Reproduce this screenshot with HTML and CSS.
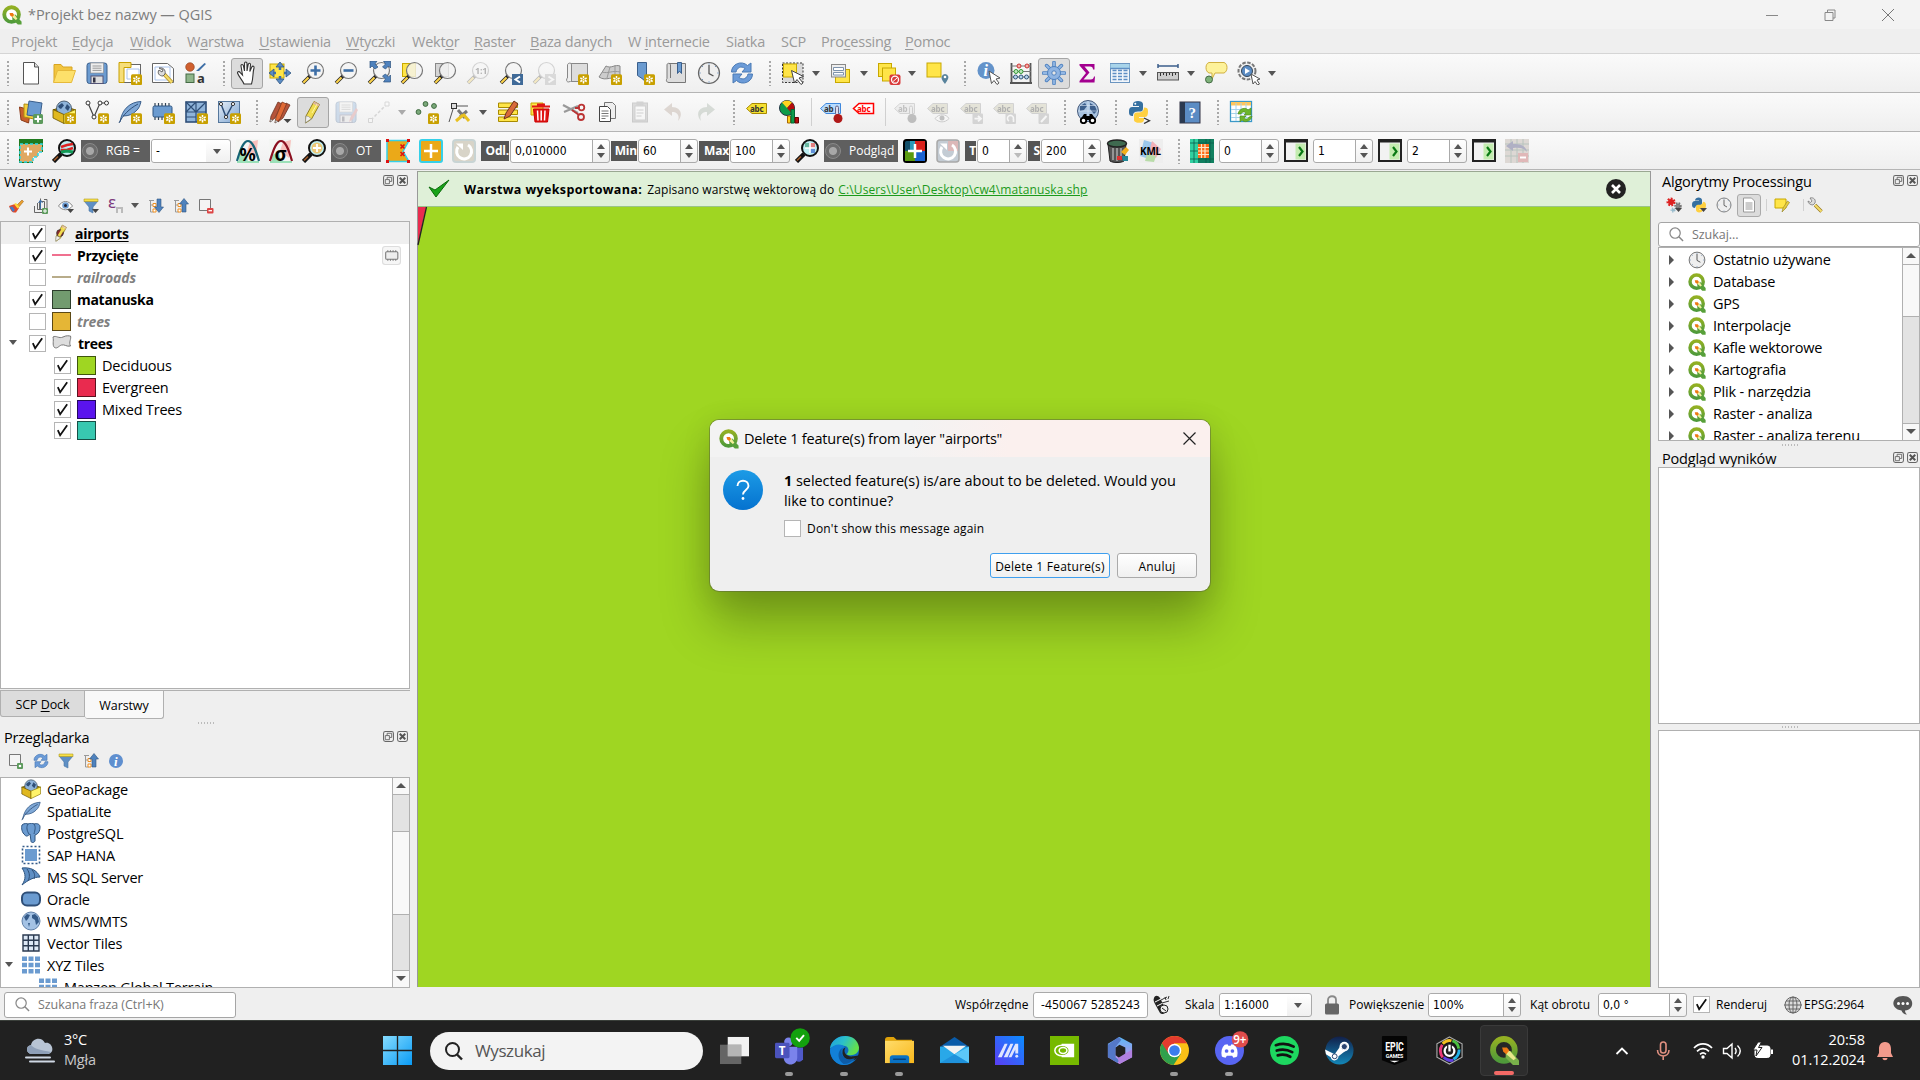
FILE: index.html
```html
<!DOCTYPE html>
<html lang="pl">
<head>
<meta charset="utf-8">
<title>*Projekt bez nazwy — QGIS</title>
<link rel="stylesheet" href="styles.css">
</head>
<body>
<svg class="paints" width="0" height="0">
<defs>
<linearGradient id="gq" x1="0" y1="0" x2="0" y2="1"><stop offset="0" stop-color="#93b023"/><stop offset="1" stop-color="#4f9a3a"/></linearGradient>
<linearGradient id="gb" x1="0" y1="0" x2="1" y2="1"><stop offset="0" stop-color="#e6eef7"/><stop offset="1" stop-color="#7ba3d0"/></linearGradient>
<linearGradient id="gw" x1="0" y1="0" x2="1" y2="1"><stop offset="0" stop-color="#86dcff"/><stop offset="1" stop-color="#0a9bf5"/></linearGradient>
<linearGradient id="ge" x1="0" y1="0" x2="1" y2=".4"><stop offset="0" stop-color="#1f9de0"/><stop offset=".5" stop-color="#2bc0c9"/><stop offset="1" stop-color="#63e04c"/></linearGradient>
<linearGradient id="gm" x1="0" y1="1" x2="1" y2="0"><stop offset="0" stop-color="#5b3df5"/><stop offset="1" stop-color="#0a8dff"/></linearGradient>
<linearGradient id="g3" x1="0" y1="0" x2="0" y2="1"><stop offset="0" stop-color="#5ab8f5"/><stop offset="1" stop-color="#d08be8"/></linearGradient>
<linearGradient id="gs" x1="0" y1="0" x2="0" y2="1"><stop offset="0" stop-color="#12204a"/><stop offset="1" stop-color="#1387b8"/></linearGradient>
<linearGradient id="gf" x1="0" y1="0" x2="1" y2="1"><stop offset="0" stop-color="#ffdc6b"/><stop offset="1" stop-color="#f9b81c"/></linearGradient>
<linearGradient id="gk" x1="0" y1="0" x2="0" y2="1"><stop offset="0" stop-color="#1c9be6"/><stop offset="1" stop-color="#0572cf"/></linearGradient>
</defs>
</svg>
<svg class="sprite">
<defs>
<g id="nb"><rect x="13" y="13.200" width="11" height="11" rx="1.500" fill="#c8a000"/><path d="M18.500 15v7.400M15.300 16.800l6.400 3.700M15.300 20.500l6.400-3.700" stroke="#fff" stroke-width="1.500"/><circle cx="18.500" cy="18.700" r="1.400" fill="#c8a000"/><circle cx="18.500" cy="18.700" r=".8" fill="#fff"/></g>
<g id="lens"><path d="M9.500 14.500L2 22" stroke="#222" stroke-width="3.600"/><path d="M7.500 16.500L2.300 21.700" stroke="#fbd24a" stroke-width="2.200"/><circle cx="14.500" cy="9.500" r="8" fill="#f4f4f4" fill-opacity=".8" stroke="#777" stroke-width="1.200"/></g>
<g id="blens"><path d="M9 15L1.500 22.500" stroke="#111" stroke-width="4.500"/><path d="M6 17.500L2 21.500" stroke="#a05a28" stroke-width="1.600"/><circle cx="15" cy="9" r="8" fill="#bdeef2" stroke="#111" stroke-width="2"/></g>
<g id="tag"><path d="M7 3.500H21.500V13.500H7L1.500 8.500Z"/></g>
</defs>
<symbol id="q" viewBox="0 0 24 24"><circle cx="11.500" cy="11.500" r="8.800" fill="#fff" stroke="url(#gq)" stroke-width="4.600"/><path d="M12 13l4-1.500L23.500 20v3.500h-4.500L12.500 17z" fill="#58a03a"/><path d="M12 11l3 .5 3.500 5-2 1.500-4.500-4z" fill="#f4ef9a"/><path d="M9 9.500l4 0 1.500 2.500-2.200 2.500-2.500-2z" fill="#ee7913"/></symbol>
<symbol id="new" viewBox="0 0 24 24"><path d="M4.500 1.500h11l4 4.500v17h-15z" fill="#fff" stroke="#555"/><path d="M15.500 1.500v4.500h4" fill="#ddd" stroke="#555"/></symbol>
<symbol id="open" viewBox="0 0 24 24"><path d="M2 21V3.500h7l2 2.500h9v4" fill="#f2c540" stroke="#d8a520"/><path d="M1.500 21.500l4-12h18l-4 12z" fill="#fde06a" stroke="#e6b93a"/></symbol>
<symbol id="save" viewBox="0 0 24 24"><rect x="2" y="2" width="20" height="20.500" rx="2.500" fill="#6b9bd0" stroke="#3a5f8c"/><rect x="5.500" y="2" width="13" height="10" fill="#eee" stroke="#888" stroke-width=".6"/><path d="M7.500 5h9M7.500 7.200h9M7.500 9.400h9" stroke="#999"/><rect x="6" y="15" width="12" height="7.500" fill="#ddd" stroke="#557"/><rect x="8" y="16.500" width="2.500" height="5" fill="#334"/></symbol>
<symbol id="lay" viewBox="0 0 24 24"><rect x="2.500" y="3.500" width="20" height="18" fill="#fff" stroke="#666"/><path d="M1 1.500h12v5H6v15H1z" fill="#f6de7a" stroke="#c8a000"/><path d="M9 8v10h12V8z" fill="none" stroke="#aac4ee"/><use href="#nb"/></symbol>
<symbol id="mgr" viewBox="0 0 24 24"><path d="M1.500 2.500h15l6 5v14h-21z" fill="#fff" stroke="#666"/><path d="M4 6h15v13H4z" fill="none" stroke="#aac4ee"/><path d="M13 13l8 8.500" stroke="#b8962e" stroke-width="4"/><path d="M13 13l8 8.500" stroke="#f5dd6a" stroke-width="2"/><path d="M8 7c4-1 7 2 6 6l-2 2c-4 0-6-3-4-6l3 2 1-2z" fill="#ddd" stroke="#666"/></symbol>
<symbol id="sty" viewBox="0 0 24 24"><circle cx="6" cy="6" r="4.300" fill="#d0602f" stroke="#8b3a18" stroke-width=".6"/><path d="M12 10L20.500 2l1.500 1-7 7z" fill="#3d6ea6"/><rect x="2" y="13" width="8" height="8.500" fill="#8fb58a" stroke="#456b45"/><text x="13" y="21.500" font-family="Noto Sans" font-size="13" fill="#333">a</text></symbol>
<symbol id="hand" viewBox="0 0 24 24"><path d="M9 23c-1-3-5-7-6.500-11 0-2 2-1.500 3-.2L7.500 14 6 5c-.2-2 2-2 2.400-.3L9.500 10V2.500c0-2 2.500-2 2.500 0V10l1.200-6.500c.5-2 2.500-1.500 2.300.3L14.800 10.500l2-4.500c1-1.500 2.700-.7 2.200 1-1.500 5-.5 10-2.500 16z" fill="#fff" stroke="#333" stroke-width="1.100"/></symbol>
<symbol id="pans" viewBox="0 0 24 24"><rect x="2" y="3" width="14" height="14" fill="#ffe548" stroke="#c8a800"/><path d="M12 1l4 5H8zM12 23l4-5H8zM1 12l5-4v8zM23 12l-5-4v8z" fill="#5b8cc4" stroke="#2f5580" stroke-width=".8"/><path d="M12 6v3M12 15v3M5 12h3M16 12h3" stroke="#3d6ea6" stroke-width="2.500"/></symbol>
<symbol id="zin" viewBox="0 0 24 24"><use href="#lens"/><path d="M14.500 4.500v10M9.500 9.500h10" stroke="#3d6ea6" stroke-width="2.600"/></symbol>
<symbol id="zout" viewBox="0 0 24 24"><use href="#lens"/><path d="M9.500 9.500h10" stroke="#3d6ea6" stroke-width="2.600"/></symbol>
<symbol id="zfull" viewBox="0 0 24 24"><use href="#lens"/><path d="M3 0h7L8 3l3 3-3 2-3-3-2 2zM23.500 0h-7l2 3-3 3 3 2 3-3 2 2zM23.500 21h-7l2-3-3-3 3-2 3 3 2-2z" fill="#4f82bd" stroke="#2f5580" stroke-width=".7"/></symbol>
<symbol id="zsel" viewBox="0 0 24 24"><rect x="2.500" y="2.500" width="13" height="13" fill="#ffe548" stroke="#c8a800"/><use href="#lens"/></symbol>
<symbol id="zlay" viewBox="0 0 24 24"><rect x="2.500" y="2.500" width="13" height="13" fill="#d5d5d5" stroke="#888"/><use href="#lens"/></symbol>
<symbol id="znat" viewBox="0 0 24 24"><use href="#lens"/><text x="9" y="13" font-family="Noto Sans" font-weight="700" font-size="9">1:1</text></symbol>
<symbol id="zlast" viewBox="0 0 24 24"><use href="#lens"/><rect x="13" y="13" width="11" height="11" fill="#3f6a98"/><path d="M21 15.500l-4.500 3 4.500 3" stroke="#fff" stroke-width="2" fill="none"/></symbol>
<symbol id="znext" viewBox="0 0 24 24"><use href="#lens"/><rect x="13" y="13" width="11" height="11" fill="#999"/><path d="M16.500 15.500l4.500 3-4.500 3" stroke="#fff" stroke-width="2" fill="none"/></symbol>
<symbol id="nmap" viewBox="0 0 24 24"><path d="M5 2.500h17.500v18H5z" fill="#ddd" stroke="#888"/><path d="M5 20.500c-4 2-4-3-2.500-3.500V4c0-2 4-3 4 0v16" fill="#eee" stroke="#888"/><use href="#nb"/></symbol>
<symbol id="n3d" viewBox="0 0 24 24"><path d="M1 16L8 5c5 3 9-2 14 0v13c-7-4-14 3-21-2z" fill="#ccc" stroke="#888"/><path d="M4 11c6 2 11-2 18 0M12 6L9 17M17 4v12" stroke="#999" fill="none"/><use href="#nb"/></symbol>
<symbol id="nbm" viewBox="0 0 24 24"><path d="M6.500 1.500h9v20l-4.500-4-4.500-3z" fill="#6b9bd0" stroke="#3a5f8c"/><use href="#nb"/></symbol>
<symbol id="sbm" viewBox="0 0 24 24"><path d="M5 2.500h16.500v19H5c-3 0-3-3-2-4V4c0-2 3-2.500 3.500 0v13" fill="#ddd" stroke="#777"/><path d="M13.500 1.500h4v11l-2-2.500-2 2.500z" fill="#6b9bd0" stroke="#3a5f8c"/></symbol>
<symbol id="clock" viewBox="0 0 24 24"><circle cx="12" cy="12" r="10.500" fill="#efefef" stroke="#666" stroke-width="1.200"/><path d="M12 4v8.500l4.500 2.500" stroke="#555" fill="none" stroke-width="1.300"/><path d="M12 2.500v1M12 20.500v1M2.500 12h1M20.500 12h1M5.300 5.300l.7.7M18.700 5.300l-.7.7M5.300 18.700l.7-.7" stroke="#3d6ea6"/></symbol>
<symbol id="ref" viewBox="0 0 24 24"><path d="M1.500 11c0-8 10-12 16-6.500L21 2v9h-9l3-3.500c-4-3-8-1-9 3.500z" fill="#6b9bd8" stroke="#4a7ab5"/><path d="M22.500 13c0 8-10 12-16 6.500L3 22v-9h9l-3 3.500c4 3 8 1 9-3.500z" fill="#6b9bd8" stroke="#4a7ab5"/></symbol>
<symbol id="sel" viewBox="0 0 24 24"><rect x="1.500" y="2" width="20.500" height="19.500" fill="#d9d9d9" stroke="#333" stroke-dasharray="2 1.500"/><rect x="2.500" y="3" width="13" height="13" fill="#ffe548" stroke="#c8a800"/><path d="M10.500 9.500l12 6-4.500 1.500 4 5-2 1.500-4-5-2.500 3.500z" fill="#fff" stroke="#444"/></symbol>
<symbol id="form" viewBox="0 0 24 24"><rect x="6.500" y="8.500" width="14" height="13" fill="#ffe548" stroke="#c8a800"/><rect x="2.500" y="3.500" width="14" height="12.500" fill="#eee" stroke="#888"/><path d="M4.500 6.500h10v3h-10zM4.500 11.500h10v2.500h-10z" fill="#fff" stroke="#7d93ad"/></symbol>
<symbol id="desel" viewBox="0 0 24 24"><rect x="1.500" y="2.500" width="13" height="13" fill="#ffe548" stroke="#c8a800"/><rect x="5.500" y="7" width="13" height="13" fill="#ffe548" stroke="#c8a800"/><rect x="12.500" y="13.500" width="11" height="10.500" rx="2" fill="#d93a3a"/><circle cx="18" cy="18.700" r="3.500" fill="none" stroke="#fff" stroke-width="1.300"/><path d="M15.500 21l5-4.500" stroke="#fff"/></symbol>
<symbol id="sloc" viewBox="0 0 24 24"><rect x="2" y="2" width="14" height="14" fill="#ffe548" stroke="#c8a800"/><path d="M20 23c-4-5-3.500-6-3.300-7.500a3.400 3.400 0 016.600 0C23.500 17 23.500 18 20 23z" fill="#58839c"/><circle cx="20" cy="16" r="1.300" fill="#fff"/></symbol>
<symbol id="iden" viewBox="0 0 24 24"><circle cx="10" cy="9.500" r="8.500" fill="#6493ca"/><text x="7.500" y="15" font-family="Liberation Serif" font-style="italic" font-weight="700" font-size="16" fill="#fff">i</text><path d="M13 10l11 7-4 1 3 4-2 1.500-3-4-2.500 3z" fill="#fff" stroke="#555"/></symbol>
<symbol id="abac" viewBox="0 0 24 24"><path d="M2.500 2v20M21.500 2v20M1 22h22" stroke="#555" stroke-width="1.800"/><path d="M2 5h20M2 10.500h20M2 16h20" stroke="#777"/><g fill="#f4b0a8" stroke="#c33"><circle cx="10" cy="5" r="2"/><circle cx="18" cy="5" r="2"/></g><g fill="#bfe8bf" stroke="#393"><circle cx="7" cy="10.500" r="2"/><circle cx="12" cy="10.500" r="2"/></g><g fill="#b8d4ee" stroke="#357"><circle cx="6.500" cy="16" r="2"/><circle cx="12" cy="16" r="2"/><circle cx="17.500" cy="16" r="2"/></g></symbol>
<symbol id="gear" viewBox="0 0 24 24"><path d="M12 1.500v21M1.500 12h21M4.600 4.600l14.800 14.800M19.400 4.600L4.600 19.400" stroke="#4f82c0" stroke-width="3.600" stroke-linecap="round"/><path d="M12 1.500v21M1.500 12h21M4.600 4.600l14.800 14.800M19.400 4.600L4.600 19.400" stroke="#94b8e4" stroke-width="1.800" stroke-linecap="round"/><circle cx="12" cy="12" r="6.500" fill="#8fb4e2" stroke="#4f82c0"/><circle cx="12" cy="12" r="2.200" fill="#e6e6e6" stroke="#4f82c0"/></symbol>
<symbol id="sum" viewBox="0 0 24 24"><path d="M4.500 3h15v5.500h-1.500c0-2-1-3-3-3H9.500l5 6-6 7h7c2.500 0 3-1 3.500-3h1L19.500 21.500h-15v-1.500l6.500-8L4.500 4.500z" fill="#a3008f"/></symbol>
<symbol id="tbl" viewBox="0 0 24 24"><rect x="2.500" y="2.500" width="19" height="19" fill="#f2f6fb" stroke="#6b95c0"/><path d="M2.500 3h19v4h-19z" fill="#a8d4ea"/><path d="M4.500 9.500h4M10 9.500h4M15.500 9.500h4M4.500 12.500h4M10 12.500h4M15.500 12.500h4M4.500 15.500h4M10 15.500h4M15.500 15.500h4M4.500 18.500h4M10 18.500h4M15.500 18.500h4M2.500 7.500h19" stroke="#5f8fc4" stroke-width="1.400"/></symbol>
<symbol id="rul" viewBox="0 0 24 24"><path d="M2 5h20M2 3v4M22 3v4" stroke="#3d5f8c" stroke-width="1.500"/><rect x="1.500" y="11.500" width="21" height="7.500" fill="#ccc" stroke="#555"/><path d="M4.500 12v3M7.500 12v2M10.500 12v3M13.500 12v2M16.500 12v3M19.500 12v2" stroke="#333"/></symbol>
<symbol id="tip" viewBox="0 0 24 24"><path d="M5 1.500h15c4 1 4 9 0 10.500h-9L8 18V12H5c-4-1.500-4-9.500 0-10.500z" fill="#fdf29a" stroke="#d0b040"/><circle cx="5" cy="18.500" r="3.500" fill="#7fb37a" stroke="#456b45"/></symbol>
<symbol id="run" viewBox="0 0 24 24"><circle cx="10" cy="10" r="8.500" fill="#eee" stroke="#777" stroke-width="2" stroke-dasharray="3.500 1.500"/><circle cx="10" cy="10" r="5.500" fill="#5b8cc4" stroke="#345"/><path d="M8 7l5 3-5 3z" fill="#fff"/><path d="M14 13l9 5-3 1 2.500 4-2 1-2.500-3.500-2 2.500z" fill="#fff" stroke="#555"/></symbol>
<symbol id="dsm" viewBox="0 0 24 24"><path d="M0.500 7l11 3-2 13L2 20z" fill="#c8602c" stroke="#8b3a18"/><path d="M5 4l11 1-1 14-10-2z" fill="#f4cf3a" stroke="#b08d10"/><path d="M10 1l13 2-2 14-13-2z" fill="#6b9bd0" stroke="#3a5f8c"/><rect x="14" y="14" width="10" height="10" rx="1.500" fill="#5c9a5c"/><path d="M19 15.500v7M15.500 19h7" stroke="#fff" stroke-width="2"/></symbol>
<symbol id="gpk" viewBox="0 0 24 24"><path d="M1 10l11-4 11.500 4L12 15z" fill="#c8a000" stroke="#665000"/><circle cx="12" cy="8.500" r="7.500" fill="#8fb4da" stroke="#345" stroke-width=".8"/><path d="M6 6l4-3 2 2.500-3 3.500-2-1zM13 8l2-4 3 3-2 4z" fill="#2f4f78"/><path d="M1 9.500l11 5v9L1 18z" fill="#e0b820" stroke="#665000" stroke-width=".8"/><path d="M23.500 9.500L12 14.500v9L23.500 18z" fill="#fff36a" stroke="#8c7500" stroke-width=".8"/></symbol>
<symbol id="gpkn" viewBox="0 0 24 24"><use href="#gpk"/><use href="#nb"/></symbol>
<symbol id="vn" viewBox="0 0 24 24"><path d="M3 3l6 14L15 3l6 0" fill="none" stroke="#444" stroke-width="1.200"/><g fill="#fff" stroke="#333"><circle cx="3" cy="3" r="2"/><circle cx="9" cy="17" r="2"/><circle cx="15" cy="3" r="2"/><circle cx="21.500" cy="3" r="2"/></g><use href="#nb"/></symbol>
<symbol id="fea" viewBox="0 0 24 24"><path d="M2 22C4 9 12 2 23 1.500c-1 4-2 7-5 9.500-3 3-7 5-13 5" fill="#7fa8d6" stroke="#3a5f8c"/><path d="M1 23C5 15 11 9 20 4" fill="none" stroke="#2f4f78"/></symbol>
<symbol id="fean" viewBox="0 0 24 24"><use href="#fea"/><use href="#nb"/></symbol>
<symbol id="mem" viewBox="0 0 24 24"><path d="M4 3v17M7.500 3v17M11 3v17M14.500 3v17M18 3v17" stroke="#345" stroke-width="1.200"/><rect x="2" y="6" width="19" height="11" rx="1.500" fill="#6b9bd0" stroke="#2f5580"/><use href="#nb"/></symbol>
<symbol id="mesh" viewBox="0 0 24 24"><rect x="2" y="2" width="20" height="20" fill="#8fb4da" stroke="#2f4f78" stroke-width="1.600"/><path d="M2 12h20M12 2v20M2 2l10 10M12 2L2 12M12 12l10-10M2 17h10" stroke="#2f4f78" stroke-width="1.200"/><use href="#nb"/></symbol>
<symbol id="vv" viewBox="0 0 24 24"><rect x="1.500" y="1.500" width="21" height="21" fill="url(#gb)" stroke="#55779c"/><path d="M4 4l5 13L16 4" fill="none" stroke="#2f4f78" stroke-width="1.500"/><g fill="#fff" stroke="#333"><circle cx="4" cy="4" r="1.600"/><circle cx="9" cy="17" r="1.600"/><circle cx="16" cy="4" r="1.600"/></g><use href="#nb"/></symbol>
<symbol id="pens" viewBox="0 0 24 24"><path d="M3 16L10 2l4 2-7 14-5 4zM12 16l6-13 4 2-7 13-5 4z" fill="#b5543a" stroke="#6d3222" stroke-width=".8"/><path d="M8 17L14 2l4.500 2L12 19l-5 4z" fill="#e06a35" stroke="#7d3820" stroke-width=".8"/><path d="M2 22l.6-3 2 1.500zM7 23l.6-3 2 1.500z" fill="#eee" stroke="#555" stroke-width=".5"/><path d="M15.500 19h8l-4 4z" fill="#444"/></symbol>
<symbol id="pen" viewBox="0 0 24 24"><path d="M5 16L13 1.500l5.500 3L10.500 19l-6 4z" fill="#f0dc50" stroke="#8f7d20"/><path d="M13 1.500l5.500 3-1 2-5.500-3z" fill="#ddb4a0"/><path d="M5 16l2.500.5 2.800 2.300-6 4z" fill="#eee" stroke="#888" stroke-width=".6"/><path d="M11 13l5-9" stroke="#fff8a0"/></symbol>
<symbol id="penpt" viewBox="0 0 24 24"><use href="#pen" x="2"/><circle cx="12" cy="12" r="4.500" fill="#8a2a2a" stroke="#333"/><path d="M9 15l6-10 3 2-6 10z" fill="#f0dc50"/></symbol>
<symbol id="sved" viewBox="0 0 24 24"><use href="#save"/><path d="M15 22l1.500-5L22 8l2 2-5 9z" fill="#c66"/></symbol>
<symbol id="line" viewBox="0 0 24 24"><path d="M4 20L20 4" stroke="#888" stroke-width="1.500" stroke-dasharray="3 2"/><g fill="#fff" stroke="#888"><path d="M1.500 18.500h4v4h-4zM18 2h4v4h-4z"/></g></symbol>
<symbol id="pts" viewBox="0 0 24 24"><g fill="#7aa87a" stroke="#3f6a3f"><circle cx="3.500" cy="12" r="2.400"/><circle cx="10.500" cy="4" r="2.400"/><circle cx="19" cy="6" r="2.400"/></g><use href="#nb"/></symbol>
<symbol id="vtx" viewBox="0 0 24 24"><path d="M1 22L6 6h14" fill="none" stroke="#555"/><rect x="3.500" y="3.500" width="5" height="5" fill="#ddd" stroke="#333"/><path d="M12 17l7-6M10 10l7 8" stroke="#777" stroke-width="3"/><path d="M8 21l7-6M15 14l6 7" stroke="#e8c020" stroke-width="3"/></symbol>
<symbol id="med" viewBox="0 0 24 24"><path d="M2.500 3h19v4.500h-19zM2.500 10h19v4.500h-19zM2.500 17h19v4.500h-19z" fill="#ffe548" stroke="#a88a00"/><path d="M8 19l2-6L18 1l4 3-8 12z" fill="#d86a3a" stroke="#6d3222"/></symbol>
<symbol id="del" viewBox="0 0 24 24"><path d="M2 3h12v12H2z" fill="#ffe548" stroke="#c8a800"/><path d="M4.500 9h15.500l-1.500 13H6z" fill="#e01515" stroke="#c00"/><path d="M3 5.500h18v2H3zM8 3.500h8v2H8z" fill="#e01515"/><path d="M8.500 10.500l.5 10M12.200 10.500v10M16 10.500l-.5 10" stroke="#fff" stroke-width="1.500"/></symbol>
<symbol id="cut" viewBox="0 0 24 24"><path d="M1 5l15 8M2 12l14-6" stroke="#999" stroke-width="2.200"/><circle cx="19.500" cy="7.500" r="2.800" fill="none" stroke="#b33" stroke-width="1.800"/><circle cx="19" cy="17" r="3" fill="none" stroke="#b33" stroke-width="1.800"/><path d="M10 10l7 5M13 8l5 0" stroke="#b33" stroke-width="1.800"/></symbol>
<symbol id="copy" viewBox="0 0 24 24"><path d="M9.500 2.500h8l3 3v13h-11z" fill="#eee" stroke="#777"/><path d="M4.500 6.500h8l3 3v12h-11z" fill="#fff" stroke="#444"/><path d="M6.500 11h7M6.500 13.500h7M6.500 16h7M6.500 18.500h4" stroke="#777"/></symbol>
<symbol id="paste" viewBox="0 0 24 24"><rect x="4.500" y="3" width="15" height="19" fill="#999" stroke="#666"/><rect x="7" y="6" width="10.500" height="14" fill="#fff" stroke="#777"/><rect x="8.500" y="1.500" width="7" height="4" fill="#777"/><path d="M8.500 10h7M8.500 13h7M8.500 16h5" stroke="#777"/></symbol>
<symbol id="undo" viewBox="0 0 24 24"><path d="M3 9.500L11 3v4c8 0 12 7 6 14 2-6-1-9-6-9v4z" fill="#a08878"/></symbol>
<symbol id="redo" viewBox="0 0 24 24"><path d="M21 9.500L13 3v4C5 7 1 14 7 21c-2-6 1-9 6-9v4z" fill="#889988"/></symbol>
<symbol id="abc" viewBox="0 0 24 24"><use href="#tag" fill="#f5e032" stroke="#a88a00"/><text x="5" y="11.600" font-family="Noto Sans" font-size="8" font-weight="700" fill="#333">abc</text></symbol>
<symbol id="abcr" viewBox="0 0 24 24"><use href="#tag" fill="#fff" stroke="red" stroke-width="1.500"/><text x="5" y="11.600" font-family="Noto Sans" font-size="8" font-weight="700" fill="red">abc</text></symbol>
<symbol id="dia" viewBox="0 0 24 24"><circle cx="9" cy="8" r="7.500" fill="#0d9b4a" stroke="#234"/><path d="M9 8L4 2.500A7.500 7.500 0 0114 2.500z" fill="#ffd21f"/><path d="M9 8l5-5.500a7.500 7.500 0 010 11z" fill="#b50d0d"/><path d="M9.500 16h3v7h-3z" fill="#ffd21f" stroke="#a60"/><path d="M13 9.500h3.500V23H13z" fill="#0d9b4a" stroke="#063"/><path d="M17 17.500h3.500V23H17z" fill="#b50d0d" stroke="#600"/></symbol>
<symbol id="abp" viewBox="0 0 24 24"><use href="#tag" fill="#b8dcff" stroke="#3f88dd"/><text x="5" y="11.600" font-family="Noto Sans" font-size="8" font-weight="700" fill="#333">ab</text><rect x="16.500" y="6" width="3" height="9" rx="1.500" fill="#dde" stroke="#668"/><circle cx="19" cy="18.500" r="4.500" fill="#b01818"/></symbol>
<symbol id="abe" viewBox="0 0 24 24"><use href="#tag" fill="#b8b48c" stroke="#777"/><text x="5" y="11.600" font-family="Noto Sans" font-size="8" font-weight="700">abc</text><path d="M9 18.500c4-5 11-5 14 0-4 4.500-10 4.500-14 0z" fill="#fff" stroke="#666"/><circle cx="16" cy="18" r="2.500" fill="#444"/></symbol>
<symbol id="abm" viewBox="0 0 24 24"><use href="#tag" fill="#b8b48c" stroke="#777"/><text x="5" y="11.600" font-family="Noto Sans" font-size="8" font-weight="700">abc</text><rect x="13.500" y="13.500" width="10.500" height="10.500" rx="1" fill="#888"/><path d="M15.500 18.700h6M19 16l3 2.700-3 2.700" stroke="#fff" stroke-width="1.800" fill="none"/></symbol>
<symbol id="abro" viewBox="0 0 24 24"><use href="#tag" fill="#b8b48c" stroke="#777"/><text x="5" y="11.600" font-family="Noto Sans" font-size="8" font-weight="700">abc</text><rect x="13.500" y="13.500" width="10.500" height="10.500" rx="1" fill="#888"/><path d="M17 21a3 3 0 114-1M21.500 22v-3" stroke="#fff" stroke-width="1.600" fill="none"/></symbol>
<symbol id="abed" viewBox="0 0 24 24"><use href="#tag" fill="#b8b48c" stroke="#777"/><text x="5" y="11.600" font-family="Noto Sans" font-size="8" font-weight="700">abc</text><rect x="13.500" y="13.500" width="10.500" height="10.500" rx="1" fill="#888"/><path d="M16 22l5.500-6" stroke="#fff" stroke-width="2"/></symbol>
<symbol id="glob" viewBox="0 0 24 24"><circle cx="12" cy="11" r="10.500" fill="#a9c3e0" stroke="#45597a"/><path d="M4 6l5-3 2 3-3 4-4 1zM14 3l5 3 2 5-3 3-4-5z" fill="#3d5f8c"/><path d="M12 1v20M2 11h20M4 5.500h16" stroke="#dde8f5" stroke-width=".6"/><path d="M4 20l4-6h2.500v2h3v-2H16l4 6z" fill="#000"/><circle cx="7.500" cy="20.500" r="2.700" fill="#fff" stroke="#000" stroke-width="1.800"/><circle cx="16.500" cy="20.500" r="2.700" fill="#fff" stroke="#000" stroke-width="1.800"/></symbol>
<symbol id="py" viewBox="0 0 24 24"><path d="M2 12c0-4 1-5 4-5h6V6H6V4c0-4 10-4 10 0v4c0 3-1 3.500-4 3.500S6 12 6 16c-3 0-4-1-4-4z" fill="#3670a0"/><circle cx="8.300" cy="3.800" r="1" fill="#fff"/><path d="M21 11c0 5-1 6-4 6h-5v1h5v2c0 4-10 3.500-10 0v-4c0-3 1-3.500 4-3.500s6-1 6-5c3 0 4 1 4 3.500z" fill="#ffd040"/></symbol>
<symbol id="pyc" viewBox="0 0 24 24"><use href="#py"/><path d="M17 18l5.500 2.700L17 23.500" fill="none" stroke="#333" stroke-width="1.300"/></symbol>
<symbol id="help" viewBox="0 0 24 24"><rect x="2" y="2" width="20" height="21" fill="#5b8cc4" stroke="#334"/><path d="M2 2h5v21H2z" fill="#2b3a50"/><text x="10.500" y="17.500" font-family="Liberation Serif" font-size="15" fill="#fff">?</text></symbol>
<symbol id="tref" viewBox="0 0 24 24"><rect x="1.500" y="1.500" width="21" height="20" fill="#fff" stroke="#3a98c8" stroke-width="1.300"/><path d="M2 2h20v3.500H2z" fill="#ffc65c"/><path d="M2 9.500h20M2 13.500h20M2 17.500h20M7 3v18M12 3v18M17 3v18" stroke="#a8d4ea"/><path d="M9 14c1-6 8-7 10-4l3-2v7h-7l2-2c-2-2-4-1-5 1zM23 16c-1 6-8 7-10 4l-2 2v-6h6l-2 2c2 2 4 1 5-1z" fill="#6cb52c" stroke="#4a8a18" stroke-width=".6"/></symbol>
<symbol id="s1" viewBox="0 0 24 24"><path d="M0 0h24v13h-5v5h-5v6H0z" fill="#1f7a1f"/><path d="M1 5h22v8h-4v5h-5v5H1z" fill="#e0a862" stroke="#2fd8e8" stroke-width="1.500" stroke-dasharray="3 2"/><path d="M9 8.500v8M5 12.500h8" stroke="#fff" stroke-width="2"/></symbol>
<symbol id="s2" viewBox="0 0 24 24"><use href="#blens"/><path d="M9 8l6-2 6-1M9 11l6 0 6-2" stroke="#d22" stroke-width="2.500"/><path d="M9 13l6-1 6 1" stroke="#195" stroke-width="3"/></symbol>
<symbol id="s3" viewBox="0 0 24 24"><rect width="24" height="24" fill="#f4f6f4"/><path d="M14 3l8-2-2 18-9-7z" fill="#f8c0bc"/><path d="M3 16l7-3 2 10H3zM1 22h22v2H1z" fill="#9be0b8"/><path d="M1 22C5 8 8 2 12 2s7 6 11 20" fill="none" stroke="#176478" stroke-width="2.200"/><text x="3.500" y="21.500" font-family="Noto Sans" font-weight="700" font-size="18">%</text></symbol>
<symbol id="s4" viewBox="0 0 24 24"><rect width="24" height="24" fill="#f4f6f4"/><path d="M14 3l8-2-2 18-9-7z" fill="#f8c0bc"/><path d="M3 16l7-3 2 10H3zM1 22h22v2H1z" fill="#9be0b8"/><path d="M1 22C5 8 8 2 12 2s7 6 11 20" fill="none" stroke="#8b1020" stroke-width="2.200"/><text x="5.500" y="21.500" font-family="Noto Sans" font-weight="700" font-size="19">σ</text></symbol>
<symbol id="s5" viewBox="0 0 24 24"><use href="#blens"/><circle cx="15" cy="9" r="5.500" fill="#ecc878"/><path d="M15 5v8M11 9h8" stroke="#fff" stroke-width="1.800"/></symbol>
<symbol id="s6" viewBox="0 0 24 24"><path d="M1 1.500h22l-6 11 6 10H1z" fill="#eba918" stroke="#35d0e8" stroke-width="1.500"/><path d="M0 0h3v3H0zM21 0h3v3h-3zM0 21h3v3H0zM21 21h3v3h-3z" fill="#d11"/><path d="M14.500 5.500l4 4m0-4l-4 4M14.500 13l4 4m0-4l-4 4" stroke="#d11" stroke-width="1.600"/></symbol>
<symbol id="s7" viewBox="0 0 24 24"><rect x="1" y="1" width="22" height="22" rx="2" fill="#eba918" stroke="#35d0e8" stroke-width="2"/><path d="M12 5v14M5 12h14" stroke="#fff" stroke-width="2.500"/></symbol>
<symbol id="s8" viewBox="0 0 24 24"><rect x="1" y="1" width="22" height="22" rx="3" fill="#d8d4c8" stroke="#c8d4d4" stroke-width="2"/><path d="M6 8a7.500 7.500 0 1010-2" stroke="#fff" stroke-width="3" fill="none"/><path d="M4 4.500h7v6.500z" fill="#fff"/></symbol>
<symbol id="s9" viewBox="0 0 24 24"><use href="#blens"/><path d="M10 4h5v5h-5z" fill="#68b8a0"/><path d="M15 4h5v5h-5z" fill="#e08080"/><path d="M15 9h5v5h-5z" fill="#6090d8"/><path d="M15 4v10M10 9h10" stroke="#fff" stroke-width="1.600"/></symbol>
<symbol id="s10" viewBox="0 0 24 24"><rect x="1" y="1" width="22" height="22" rx="2.500" fill="#14506a" stroke="#000" stroke-width="2"/><path d="M12 2h10v10H12z" fill="#d8201a"/><path d="M2 12h10v10H2z" fill="#5a9a10"/><path d="M12 12h10v10H12z" fill="#1a62d0"/><path d="M7 2h5v10H7z" fill="#2a9ab8"/><path d="M12 5v14M5 12h14" stroke="#fff" stroke-width="2.500"/></symbol>
<symbol id="s11" viewBox="0 0 24 24"><rect x="1" y="1" width="22" height="22" rx="3" fill="#c4ccd4" stroke="#a8a8a8" stroke-width="1.500"/><path d="M12 2h10v10H12z" fill="#dcb8b8"/><path d="M6 8a7.500 7.500 0 1010-2" stroke="#fff" stroke-width="3" fill="none"/><path d="M4 4.500h7v6.500z" fill="#fff"/></symbol>
<symbol id="s12" viewBox="0 0 24 24"><path d="M2 5h18l-2 17c-3 2-11 2-14 0z" fill="#555" stroke="#222"/><ellipse cx="11" cy="4.500" rx="9.500" ry="3.500" fill="#3f6a50" stroke="#222" stroke-width="1.500"/><path d="M7 9v12M11 9v13M15 9v12" stroke="#aaa" stroke-width="1.500"/><path d="M15 13l5-5 3 3-4 5z" fill="#f4b01a"/><path d="M11 17h5v4h-5z" fill="#d33"/><path d="M16 17h6v5h-5z" fill="#289"/></symbol>
<symbol id="s13" viewBox="0 0 24 24"><rect width="24" height="24" fill="#eee"/><path d="M5 1l10 3-5 16-9-3z" fill="#9cc8ec"/><path d="M13 2l9 8-5 9-7-5z" fill="#f2b0b8"/><path d="M8 15l9 2-2 6-9-1z" fill="#b8dca8"/><text x="1" y="16" font-family="Noto Sans" font-weight="700" font-size="10.500" textLength="21" lengthAdjust="spacingAndGlyphs">KML</text></symbol>
<symbol id="s14" viewBox="0 0 24 24"><rect width="24" height="24" fill="#118060"/><path d="M0 0h8v24H0z" fill="#30d0a0"/><path d="M4 0v24M0 4h24M16 0v24M20 0v24M0 20h24M0 12h8" stroke="#0a5c4c" stroke-width=".8"/><path d="M8 5h11v14H8z" fill="#ff6a18"/><path d="M11.500 5v14M15 5v14M8 8.500h11M8 12h11M8 15.500h11" stroke="#ffe8c8" stroke-width="1.200"/></symbol>
<symbol id="s15" viewBox="0 0 24 24"><rect x="1" y="2.500" width="22" height="19.500" fill="#f2f2f2" stroke="#222" stroke-width="2"/><path d="M0 1.500h24" stroke="#222" stroke-width="3"/><path d="M11.500 4.500h10v16h-10z" fill="#c4ecb0"/><path d="M15 8l3.500 4.500L15 17" fill="none" stroke="#0a7a14" stroke-width="2.200"/></symbol>
<symbol id="s16" viewBox="0 0 24 24"><rect width="24" height="24" fill="#ddd8d4"/><path d="M0 5h24M0 11h24M0 17h24M6 0v24M12 0v24M18 0v24" stroke="#b8c4be"/><path d="M1 7l7-5v3c8 0 13 2 14 8-3-4-7-5-14-4v3z" fill="#b0b0c4"/><rect x="13" y="14" width="10" height="9" fill="#e0b8b8"/><path d="M15 18.500h6" stroke="#fff" stroke-width="2"/></symbol>
<symbol id="brush" viewBox="0 0 16 16"><path d="M8 8l6-6 1.500 1.500L10 10z" fill="#e8a030" stroke="#a86a18" stroke-width=".6"/><path d="M1 8l6-2 4 4-3 4.500C4 15 3 13 1 8z" fill="#e04a28"/><path d="M6 6l2-1 3.500 4-2 1.500z" fill="#ffd83a"/><path d="M1.500 9l3-.5 2.500 3.500-2 2z" fill="#4878c8"/></symbol>
<symbol id="grp" viewBox="0 0 16 16"><path d="M4.500 5v6.500h7V3.500h-4v-3M1.500 8v6.500h8M6.500 3v8M11 1.500h3v9" fill="none" stroke="#666"/><path d="M7.500 11V3M5.500 5l2-3 2 3" stroke="#3d6ea6" fill="none"/><rect x="9" y="10" width="6" height="6" rx="1" fill="#5c9a5c"/><path d="M12 11v4M10 13h4" stroke="#fff"/></symbol>
<symbol id="eye" viewBox="0 0 16 16"><path d="M.5 8c4-6 10-6 14 0-4 5-10 5-14 0z" fill="#fff" stroke="#888"/><circle cx="7.500" cy="7.500" r="3.300" fill="#6b9bd0"/><circle cx="7.500" cy="7.500" r="1.500" fill="#223"/><path d="M9 11h7l-3.500 4z" fill="#444"/></symbol>
<symbol id="fil" viewBox="0 0 16 16"><path d="M1 3h14l-5 6v6l-4-2V9z" fill="#5f8fc4" stroke="#4a75a5" stroke-width=".6"/><path d="M1 1h14v2.500H1z" fill="#f8e048" stroke="#b09a20" stroke-width=".6"/></symbol>
<symbol id="film" viewBox="0 0 16 16"><use href="#fil"/><path d="M9 11h7l-3.500 4z" fill="#444"/></symbol>
<symbol id="eps" viewBox="0 0 16 16"><text x="0" y="10" font-family="Noto Sans" font-size="17" fill="#7d3a7d">ε</text><path d="M8 9h7v6h-2v-4h-3v4H8z" fill="#bbb"/></symbol>
<symbol id="exp" viewBox="0 0 16 16"><path d="M1 2.500h5M2.500 2v12h3M2.500 7h3" stroke="#999" fill="none"/><path d="M5 5.500h3v3H5zM5 11h3v3H5z" fill="#fff" stroke="#f09020"/><path d="M9 1h4v8h2.500L11 14.500 6.500 9H9z" fill="#4f82bd" stroke="#2f5580" stroke-width=".6"/></symbol>
<symbol id="col" viewBox="0 0 16 16"><path d="M1 2.500h5M2.500 2v12h3M2.500 7h3" stroke="#999" fill="none"/><path d="M5 5.500h3v3H5zM5 11h3v3H5z" fill="#fff" stroke="#f09020"/><path d="M9 14h4V6h2.500L11 .5 6.500 6H9z" fill="#4f82bd" stroke="#2f5580" stroke-width=".6"/></symbol>
<symbol id="rem" viewBox="0 0 16 16"><path d="M1.500 1.500h11v11h-11z" fill="#f4f4f4" stroke="#777"/><rect x="9" y="10" width="6.500" height="5.500" rx="1" fill="#dd4444"/><path d="M10.500 12.700h3.500" stroke="#fff" stroke-width="1.300"/></symbol>
<symbol id="addl" viewBox="0 0 16 16"><path d="M1.500 1.500h11v11h-11z" fill="#f4f4f4" stroke="#777"/><rect x="9" y="10" width="6" height="6" rx="1" fill="#5c9a5c"/><circle cx="12" cy="13" r="1.300" fill="#fff"/></symbol>
<symbol id="info" viewBox="0 0 16 16"><circle cx="8" cy="8" r="7" fill="#5f8fcf"/><text x="6" y="12.500" font-family="Liberation Serif" font-style="italic" font-weight="700" font-size="13" fill="#fff">i</text></symbol>
<symbol id="poly" viewBox="0 0 20 16"><path d="M1 2c3-2 6 2 10 0s6-1 7.500-1c1 3-2 6 0 10-4 1-6-2-9-1s-4 4-7 2.500C0 10 2 6 1 2z" fill="#ddd" stroke="#777"/></symbol>
<symbol id="gears" viewBox="0 0 16 16"><circle cx="5" cy="5" r="3" fill="#d22" stroke="#d22" stroke-width="3" stroke-dasharray="1.600 1.100"/><circle cx="12" cy="9" r="2.500" fill="#888" stroke="#777" stroke-width="2.500" stroke-dasharray="1.400 1"/><circle cx="7" cy="13" r="1.500" fill="#9bc" stroke="#9bc" stroke-width="2" stroke-dasharray="1 .8"/><path d="M9 11h7l-3.500 4z" fill="#444"/></symbol>
<symbol id="pym" viewBox="0 0 16 16"><path d="M1 8c0-3 1-4 3-4h4V3.500H4c0-4 7-4 7-.5v3c0 2-1 2.300-3 2.300S4.500 8.500 4 11C2 11 1 10 1 8z" fill="#3670a0"/><path d="M15 8c0 3-1 4-3 4H8v.5h4c0 3.500-7 4-7 .5V10c0-2 1-2.300 3-2.300s3.500-.2 4-3C14 4.700 15 6 15 8z" fill="#ffd040"/><path d="M9 11h7l-3.500 4z" fill="#444"/></symbol>
<symbol id="doc" viewBox="0 0 16 16"><path d="M2.500 1h8l3 3v11h-11z" fill="#fff" stroke="#999"/><path d="M4.500 6h7M4.500 8h7M4.500 10h7M4.500 12h7" stroke="#999"/></symbol>
<symbol id="edt" viewBox="0 0 16 16"><path d="M1 2h11v9H1z" fill="#ffe548" stroke="#c8a800"/><path d="M8 15l1-4 4.500-7 2 1.500L11 12z" fill="#e8cf40" stroke="#8f7d20" stroke-width=".6"/></symbol>
<symbol id="wr" viewBox="0 0 16 16"><path d="M8 8l6.500 6.500" stroke="#9a7a20" stroke-width="3.400"/><path d="M8 8l6.500 6.500" stroke="#f5dd6a" stroke-width="2"/><path d="M3 1c4-1 6 2 5 5l-2 2C3 8 1 6 1 4l2.500 1.500L5 4z" fill="#ddd" stroke="#777" stroke-width=".8"/></symbol>
<symbol id="pg" viewBox="0 0 20 20"><path d="M1 2c2-2 5-1.500 6-1 2-1 5-1 6 0 3-1 6 0 6 3s-1 6-3 7l-2 1v6c-1 2-4 2-4 0l-1-7c-2 2-4 3-5 1C1 10 0 5 1 2z" fill="#6b9bd0" stroke="#2f5580"/><path d="M7 1c-2 3-1 7 1 10M13 1c2 3 1 6 0 10" stroke="#2f5580" fill="none"/></symbol>
<symbol id="hana" viewBox="0 0 20 20"><rect x="1.500" y="1.500" width="17" height="17" fill="none" stroke="#345a88" stroke-width="1.600" stroke-dasharray="2 2"/><rect x="4" y="4" width="12" height="12" fill="#6b9bd0"/></symbol>
<symbol id="ms" viewBox="0 0 20 20"><path d="M1 1c8-1 15 2 18 9-6 0-12 3-18 8 4-6 4-11 0-17z" fill="#5f8fc4" stroke="#2f5580"/><path d="M6 2c3 4 3 8 1 12M11 3c3 3 3 6 2 9" stroke="#2f4f78" fill="none"/></symbol>
<symbol id="ora" viewBox="0 0 20 20"><rect x="1" y="3.500" width="18" height="13" rx="5" fill="#6b9bd0" stroke="#2f4f78" stroke-width="2"/></symbol>
<symbol id="wms" viewBox="0 0 20 20"><circle cx="10" cy="10" r="9" fill="#a4c2e4" stroke="#5f7fa8"/><path d="M3 6l3-3 3 1-2 4-2 2zM11 4l3-1 3 3 1 5-3 3-1-5-3-2zM7 12l2 0-1 4z" fill="#345a88"/></symbol>
<symbol id="vt" viewBox="0 0 20 20"><rect x="2" y="2" width="16" height="16" fill="#dde8f5"/><path d="M2 2h16v16H2zM7.300 2v16M12.700 2v16M2 7.300h16M2 12.700h16" stroke="#2b3a50" stroke-width="1.400" fill="none"/></symbol>
<symbol id="xyz" viewBox="0 0 20 20"><path d="M1 1.500h5v4.500H1zM7.500 1.500h5v4.500h-5zM14 1.500h5v4.500h-5zM1 7.800h5v4.500H1zM7.500 7.800h5v4.500h-5zM14 7.800h5v4.500h-5zM1 14h5v4.500H1zM7.500 14h5v4.500h-5zM14 14h5v4.500h-5z" fill="#6b9bd0"/></symbol>
<symbol id="srch" viewBox="0 0 16 16"><circle cx="6.500" cy="6.500" r="5.500" fill="none" stroke="#888" stroke-width="1.300"/><path d="M10.500 10.500l4.500 4.500" stroke="#888" stroke-width="1.600"/></symbol>
<symbol id="fl" viewBox="0 0 12 12"><rect x=".6" y=".6" width="10.800" height="10.800" rx="2" fill="none" stroke="#666" stroke-width="1.100"/><path d="M4.500 4.500v-2h5v4.500h-2M2.500 5h4.500v4.500H2.500z" fill="none" stroke="#666"/></symbol>
<symbol id="xx" viewBox="0 0 12 12"><rect x=".6" y=".6" width="10.800" height="10.800" rx="2" fill="none" stroke="#666" stroke-width="1.100"/><path d="M3 3l6 6M9 3l-6 6" stroke="#555" stroke-width="2.200"/></symbol>
<symbol id="chk" viewBox="0 0 16 16"><path d="M3 7.500l2.500 5.500L13 2.500" fill="none" stroke="#111" stroke-width="1.900"/></symbol>
</svg>

<header class="titlebar">
  <svg class="s20"><use href="#q"/></svg><span class="wintitle">*Projekt bez nazwy — QGIS</span>
  <div class="winbtns">
    <svg width="12" height="12"><path d="M0 6.500h12" stroke="#888"/></svg>
    <svg width="12" height="12"><path d="M1 3.500h8v8H1zM3.500 3V1h7.500v8h-2" fill="none" stroke="#888"/></svg>
    <svg width="12" height="12"><path d="M0 0l12 12M12 0L0 12" stroke="#777"/></svg>
  </div>
</header>
<nav class="menu"><span>Pro<u>j</u>ekt</span><span><u>E</u>dycja</span><span><u>W</u>idok</span><span>W<u>a</u>rstwa</span><span><u>U</u>stawienia</span><span><u>W</u>tyczki</span><span>Wekt<u>o</u>r</span><span><u>R</u>aster</span><span><u>B</u>aza danych</span><span>W <u>i</u>nternecie</span><span>Siatka</span><span>SCP</span><span>Pro<u>c</u>essing</span><span><u>P</u>omoc</span></nav>

<div class="toolbar">
<i class="hd first"></i>
<b class="tb"><svg><use href="#new"/></svg></b><b class="tb"><svg><use href="#open"/></svg></b><b class="tb"><svg><use href="#save"/></svg></b><b class="tb"><svg><use href="#lay"/></svg></b><b class="tb"><svg><use href="#mgr"/></svg></b><b class="tb"><svg><use href="#sty"/></svg></b>
<i class="hd"></i>
<b class="tb on"><svg><use href="#hand"/></svg></b><b class="tb"><svg><use href="#pans"/></svg></b><b class="tb"><svg><use href="#zin"/></svg></b><b class="tb"><svg><use href="#zout"/></svg></b><b class="tb"><svg><use href="#zfull"/></svg></b><b class="tb"><svg><use href="#zsel"/></svg></b><b class="tb"><svg><use href="#zlay"/></svg></b><b class="tb off"><svg><use href="#znat"/></svg></b><b class="tb"><svg><use href="#zlast"/></svg></b><b class="tb off"><svg><use href="#znext"/></svg></b><b class="tb"><svg><use href="#nmap"/></svg></b><b class="tb"><svg><use href="#n3d"/></svg></b><b class="tb"><svg><use href="#nbm"/></svg></b><b class="tb"><svg><use href="#sbm"/></svg></b><b class="tb"><svg><use href="#clock"/></svg></b><b class="tb"><svg><use href="#ref"/></svg></b>
<i class="hd"></i>
<b class="tb dd"><svg><use href="#sel"/></svg></b><b class="tb dd"><svg><use href="#form"/></svg></b><b class="tb dd"><svg><use href="#desel"/></svg></b><b class="tb"><svg><use href="#sloc"/></svg></b>
<i class="hd"></i>
<b class="tb"><svg><use href="#iden"/></svg></b><b class="tb"><svg><use href="#abac"/></svg></b><b class="tb on"><svg><use href="#gear"/></svg></b><b class="tb"><svg><use href="#sum"/></svg></b><b class="tb dd"><svg><use href="#tbl"/></svg></b><b class="tb dd"><svg><use href="#rul"/></svg></b><b class="tb"><svg><use href="#tip"/></svg></b><b class="tb dd"><svg><use href="#run"/></svg></b>
</div>
<div class="toolbar">
<i class="hd first"></i>
<b class="tb"><svg><use href="#dsm"/></svg></b><b class="tb"><svg><use href="#gpkn"/></svg></b><b class="tb"><svg><use href="#vn"/></svg></b><b class="tb"><svg><use href="#fean"/></svg></b><b class="tb"><svg><use href="#mem"/></svg></b><b class="tb"><svg><use href="#mesh"/></svg></b><b class="tb"><svg><use href="#vv"/></svg></b>
<i class="hd"></i>
<b class="tb"><svg><use href="#pens"/></svg></b><b class="tb on"><svg><use href="#pen"/></svg></b><b class="tb off"><svg><use href="#sved"/></svg></b><b class="tb dd off"><svg><use href="#line"/></svg></b><b class="tb"><svg><use href="#pts"/></svg></b><b class="tb dd"><svg><use href="#vtx"/></svg></b><b class="tb"><svg><use href="#med"/></svg></b><b class="tb"><svg><use href="#del"/></svg></b><b class="tb"><svg><use href="#cut"/></svg></b><b class="tb"><svg><use href="#copy"/></svg></b><b class="tb off"><svg><use href="#paste"/></svg></b><b class="tb off"><svg><use href="#undo"/></svg></b><b class="tb off"><svg><use href="#redo"/></svg></b>
<i class="hd"></i>
<b class="tb"><svg><use href="#abc"/></svg></b><b class="tb"><svg><use href="#dia"/></svg></b>
<i class="sp"></i>
<b class="tb"><svg><use href="#abp"/></svg></b><b class="tb"><svg><use href="#abcr"/></svg></b>
<i class="sp"></i>
<b class="tb off gray"><svg><use href="#abp"/></svg></b><b class="tb off"><svg><use href="#abe"/></svg></b><b class="tb off"><svg><use href="#abm"/></svg></b><b class="tb off"><svg><use href="#abro"/></svg></b><b class="tb off"><svg><use href="#abed"/></svg></b>
<i class="hd"></i><b class="tb"><svg><use href="#glob"/></svg></b><i class="hd"></i><b class="tb"><svg><use href="#pyc"/></svg></b><i class="hd"></i><b class="tb"><svg><use href="#help"/></svg></b><i class="hd"></i><b class="tb"><svg><use href="#tref"/></svg></b>
</div>
<div class="toolbar scp">
<i class="hd first"></i>
<b class="tb"><svg><use href="#s1"/></svg></b><b class="tb"><svg><use href="#s2"/></svg></b>
<span class="dark w69"><i class="rad"></i>RGB =</span><span class="spin w80 combo"><span>-</span></span>
<b class="tb"><svg><use href="#s3"/></svg></b><b class="tb"><svg><use href="#s4"/></svg></b><b class="tb"><svg><use href="#s5"/></svg></b>
<span class="dark w50"><i class="rad"></i>OT</span>
<b class="tb"><svg><use href="#s6"/></svg></b><b class="tb"><svg><use href="#s7"/></svg></b><b class="tb"><svg><use href="#s8"/></svg></b>
<span class="lab w28">Odl.</span><span class="spin w100"><span>0,010000</span></span>
<span class="lab w26">Min</span><span class="spin w60"><span>60</span></span>
<span class="lab w30">Max</span><span class="spin w60"><span>100</span></span>
<b class="tb"><svg><use href="#s9"/></svg></b>
<span class="dark w74"><i class="rad"></i>Podgląd</span>
<b class="tb"><svg><use href="#s10"/></svg></b><b class="tb"><svg><use href="#s11"/></svg></b>
<span class="lab w11">T</span><span class="spin w50 low"><span>0</span></span>
<span class="lab w12">S</span><span class="spin w60"><span>200</span></span>
<b class="tb"><svg><use href="#s12"/></svg></b><b class="tb"><svg><use href="#s13"/></svg></b>
<i class="hd"></i>
<b class="tb"><svg><use href="#s14"/></svg></b><span class="spin w60"><span>0</span></span><b class="tb"><svg><use href="#s15"/></svg></b><span class="spin w60"><span>1</span></span><b class="tb"><svg><use href="#s15"/></svg></b><span class="spin w60"><span>2</span></span><b class="tb"><svg><use href="#s15"/></svg></b><b class="tb"><svg><use href="#s16"/></svg></b>
</div>

<main class="work">
<section class="left">
  <div class="dock"><span>Warstwy</span><svg><use href="#fl"/></svg><svg><use href="#xx"/></svg></div>
  <div class="minibar"><svg><use href="#brush"/></svg><svg><use href="#grp"/></svg><svg><use href="#eye"/></svg><svg><use href="#film"/></svg><svg><use href="#eps"/></svg><i class="arr"></i><svg><use href="#exp"/></svg><svg><use href="#col"/></svg><svg><use href="#rem"/></svg></div>
  <div class="tree layers">
    <div class="row cur"><i class="cb"><svg><use href="#chk"/></svg></i><svg class="sym"><use href="#penpt"/></svg><span class="bold"><u>airports</u></span></div>
    <div class="row"><i class="cb"><svg><use href="#chk"/></svg></i><i class="ln pink"></i><span class="bold">Przycięte</span><svg class="chip" viewBox="0 0 18 18"><rect x=".5" y=".5" width="17" height="17" rx="2.500" fill="#f6f6f6" stroke="#ddd"/><path d="M5.500 4v10M8 4v10M10.500 4v10M13 4v10" stroke="#777"/><rect x="3.500" y="5.500" width="11.500" height="7" rx="1" fill="#eee" stroke="#777"/></svg></div>
    <div class="row"><i class="cb"></i><i class="ln tan"></i><span class="ital">railroads</span></div>
    <div class="row"><i class="cb"><svg><use href="#chk"/></svg></i><i class="sw green"></i><span class="bold">matanuska</span></div>
    <div class="row"><i class="cb"></i><i class="sw amber"></i><span class="ital">trees</span></div>
    <div class="row"><i class="tri"></i><i class="cb"><svg><use href="#chk"/></svg></i><svg class="poly"><use href="#poly"/></svg><span class="bold">trees</span></div>
    <div class="row sub"><i class="cb"><svg><use href="#chk"/></svg></i><i class="sw lime"></i><span>Deciduous</span></div>
    <div class="row sub"><i class="cb"><svg><use href="#chk"/></svg></i><i class="sw red"></i><span>Evergreen</span></div>
    <div class="row sub"><i class="cb"><svg><use href="#chk"/></svg></i><i class="sw violet"></i><span>Mixed Trees</span></div>
    <div class="row sub last"><i class="cb"><svg><use href="#chk"/></svg></i><i class="sw teal"></i></div>
  </div>
  <div class="tabs"><span class="tab">SCP <u>D</u>ock</span><span class="tab act">Warstwy</span></div>
  <i class="dots"></i>
  <div class="dock d2"><span>Przeglądarka</span><svg><use href="#fl"/></svg><svg><use href="#xx"/></svg></div>
  <div class="minibar m2"><svg><use href="#addl"/></svg><svg><use href="#ref"/></svg><svg><use href="#fil"/></svg><svg><use href="#col"/></svg><svg><use href="#info"/></svg></div>
  <div class="tree browser">
    <div class="rows">
      <div class="row"><svg><use href="#gpk"/></svg><span>GeoPackage</span></div>
      <div class="row"><svg><use href="#fea"/></svg><span>SpatiaLite</span></div>
      <div class="row"><svg><use href="#pg"/></svg><span>PostgreSQL</span></div>
      <div class="row"><svg><use href="#hana"/></svg><span>SAP HANA</span></div>
      <div class="row"><svg><use href="#ms"/></svg><span>MS SQL Server</span></div>
      <div class="row"><svg><use href="#ora"/></svg><span>Oracle</span></div>
      <div class="row"><svg><use href="#wms"/></svg><span>WMS/WMTS</span></div>
      <div class="row"><svg><use href="#vt"/></svg><span>Vector Tiles</span></div>
      <div class="row"><i class="tri"></i><svg><use href="#xyz"/></svg><span>XYZ Tiles</span></div>
      <div class="row in"><svg><use href="#xyz"/></svg><span>Mapzen Global Terrain</span></div>
    </div>
    <div class="scroll"><i class="up"></i><i class="track"></i><i class="thumb"></i><i class="track2"></i><i class="down"></i></div>
  </div>
</section>
<i class="vs"></i>
<section class="map">
  <div class="msg"><svg class="ok" width="26" height="20"><path d="M2 8l6 3L22 1 9 18z" fill="#19a319" stroke="#0b6b0b"/></svg><b>Warstwa wyeksportowana:</b><span>Zapisano warstwę wektorową do</span><a>C:\Users\User\Desktop\cw4\matanuska.shp</a><svg class="cl" width="22" height="22"><circle cx="11" cy="11" r="10" fill="#222"/><path d="M7 7l8 8M15 7l-8 8" stroke="#fff" stroke-width="2.600"/></svg></div>
  <svg class="feat" width="12" height="40"><path d="M0 0h8L0 37z" fill="#e92b4f"/><path d="M8.500 0L0 38" stroke="#232323" stroke-width="1.300"/></svg>
</section>
<i class="vs"></i>
<section class="right">
  <div class="dock"><span>Algorytmy Processingu</span><svg><use href="#fl"/></svg><svg><use href="#xx"/></svg></div>
  <div class="minibar m3"><svg><use href="#gears"/></svg><svg><use href="#pym"/></svg><svg><use href="#clock"/></svg><b class="on"><svg><use href="#doc"/></svg></b><i class="sp"></i><svg><use href="#edt"/></svg><i class="sp"></i><svg><use href="#wr"/></svg></div>
  <div class="find"><svg><use href="#srch"/></svg>Szukaj...</div>
  <div class="tree algs">
    <div class="rows">
      <div class="row"><i class="rt"></i><svg><use href="#clock"/></svg><span>Ostatnio używane</span></div>
      <div class="row"><i class="rt"></i><svg><use href="#q"/></svg><span>Database</span></div>
      <div class="row"><i class="rt"></i><svg><use href="#q"/></svg><span>GPS</span></div>
      <div class="row"><i class="rt"></i><svg><use href="#q"/></svg><span>Interpolacje</span></div>
      <div class="row"><i class="rt"></i><svg><use href="#q"/></svg><span>Kafle wektorowe</span></div>
      <div class="row"><i class="rt"></i><svg><use href="#q"/></svg><span>Kartografia</span></div>
      <div class="row"><i class="rt"></i><svg><use href="#q"/></svg><span>Plik - narzędzia</span></div>
      <div class="row"><i class="rt"></i><svg><use href="#q"/></svg><span>Raster - analiza</span></div>
      <div class="row"><i class="rt"></i><svg><use href="#q"/></svg><span>Raster - analiza terenu</span></div>
    </div>
    <div class="scroll"><i class="up"></i><i class="thumb"></i><i class="track2"></i><i class="down"></i></div>
  </div>
  <i class="dots d3"></i>
  <div class="dock d4"><span>Podgląd wyników</span><svg><use href="#fl"/></svg><svg><use href="#xx"/></svg></div>
  <div class="tree res"></div>
  <i class="dots d5"></i>
  <div class="tree res2"></div>
</section>
</main>

<footer class="status">
  <div class="find loc"><svg><use href="#srch"/></svg>Szukana fraza (Ctrl+K)</div>
  <span class="t1">Współrzędne</span><span class="box">-450067 5285243</span>
  <svg class="mouse" width="20" height="22"><path d="M3 4c1-3 4-3 6 0l5 10c2 4-2 8-5 5L4 10C3 8 2 6 3 4z" fill="#222"/><path d="M4 8l6-3M6 12l6-3M11 2l2 5M15 3l-2 4" stroke="#fff"/><circle cx="13" cy="15" r="4" fill="#eee" stroke="#222"/><path d="M11 14l4 3" stroke="#222"/><path d="M10 6l6-3M11 9l7-2M14 3l1 3M18 2l-1 3" stroke="#333"/></svg>
  <span class="t2">Skala</span><span class="spin combo w93"><span>1:16000</span></span>
  <svg class="lock" width="16" height="20"><path d="M4 9V5c0-5 8-5 8 0v4" fill="none" stroke="#888" stroke-width="1.800"/><rect x="1" y="8.500" width="14" height="11" rx="1.500" fill="#666"/></svg>
  <span class="t3">Powiększenie</span><span class="spin w93"><span>100%</span></span>
  <span class="t4">Kąt obrotu</span><span class="spin w89"><span>0,0 °</span></span>
  <i class="cb"><svg><use href="#chk"/></svg></i><span class="t5">Renderuj</span>
  <svg class="crs" width="20" height="18"><circle cx="10" cy="9" r="8" fill="#ddd" stroke="#666"/><ellipse cx="10" cy="9" rx="4" ry="8" fill="none" stroke="#666"/><path d="M10 1v16M1 9h18M3 5h14M3 13h14" stroke="#666"/></svg>
  <span class="t6">EPSG:2964</span>
  <svg class="chat" width="20" height="20"><path d="M10 1c12 0 12 14 2 14.500 0 2 1 3 2 4-3 0-5-2-5.500-4C-3 14-2 1 10 1z" fill="#555"/><circle cx="5.500" cy="8.500" r="1.500" fill="#fff"/><circle cx="10" cy="8.500" r="1.500" fill="#fff"/><circle cx="14.500" cy="8.500" r="1.500" fill="#fff"/></svg>
</footer>

<footer class="task">
  <svg class="wx" width="34" height="32"><path d="M8 20c-6 0-7-8-1-9 1-7 11-9 14-2 7-2 11 10 3 11z" fill="#b8c4d4"/><path d="M8 20c-6 0-7-8-1-9 3 4 10 5 20 7l-3 2z" fill="#8fa0b8"/><path d="M2 23.500h24M6 27.500h24" stroke="#cfd8e4" stroke-width="2" stroke-linecap="round"/></svg>
  <div class="wt"><span>3°C</span><span>Mgła</span></div>
  <div class="apps">
    <b class="app"><svg viewBox="0 0 30 30"><path d="M0 0h14.300v14.300H0zM15.700 0H30v14.300H15.700zM0 15.700h14.300V30H0zM15.700 15.700H30V30H15.700z" fill="url(#gw)"/></svg></b>
    <span class="wsearch"><svg width="20" height="20"><circle cx="8.500" cy="8.500" r="6.500" fill="none" stroke="#222" stroke-width="2"/><path d="M13 13.500l5 5" stroke="#222" stroke-width="2.400"/></svg>Wyszukaj</span>
    <b class="app"><svg viewBox="0 0 30 30"><rect x="8" y="1" width="22" height="20" fill="#f2f2f2"/><rect y="9" width="22" height="20" fill="#777" fill-opacity=".8"/><rect x="8" y="9" width="14" height="12" fill="#b5b5b5"/></svg></b>
    <b class="app run"><svg viewBox="0 0 30 30"><circle cx="14" cy="6" r="4.500" fill="#7b83eb"/><path d="M20 12h9v12c-3 4-7 3-9 0z" fill="#5059c9"/><path d="M9 11h14v11c0 10-14 10-14 0z" fill="#7b83eb"/><rect y="7" width="15" height="16" rx="1.500" fill="#4b53bc"/><text x="4" y="19.500" font-family="Noto Sans" font-weight="700" font-size="12" fill="#fff">T</text><circle cx="26" cy="2" r="10" fill="#13a10e"/><path d="M22 2l3 3 5-6" fill="none" stroke="#fff" stroke-width="2"/></svg></b>
    <b class="app run"><svg viewBox="0 0 30 30"><circle cx="15" cy="15" r="15" fill="#0f6cbd"/><path d="M0 13C2-3 28-5 30 12c0 8-9 9-13 7 4-4 2-9-3-9C8 9 4 10 0 13z" fill="url(#ge)"/><path d="M0 14c4-7 14-6 15-2-6 0-6 8 0 12 4 2 9 1 12-2-4 8-14 10-20 6-4-3-7-8-7-14z" fill="#1280d8"/><path d="M16 12c-3 5 1 10 8 9 3 0 5-1 6-1-1 2-2 3-3 4-8 4-15-2-14-8 0-2 1-3 3-4z" fill="#212121"/><path d="M12 13c-2 6 3 12 9 11l5-1c-3 4-7 6-12 6-6-4-7-12-2-16z" fill="#0d5ca8"/></svg></b>
    <b class="app run"><svg viewBox="0 0 30 30"><path d="M0 4c0-2 1-3 3-3h6l3 3h16v8H0z" fill="#dfa20a"/><rect y="5" width="30" height="23" fill="url(#gf)"/><path d="M5 28v-5c0-2 1-3 3-3h14c2 0 3 1 3 3v5z" fill="#0a72c4"/><path d="M9 24h12" stroke="#053f78" stroke-width="1.500" stroke-linecap="round"/></svg></b>
    <b class="app"><svg viewBox="0 0 30 30"><path d="M0 11L15 1l15 10z" fill="#0a5ba8"/><path d="M0 11h30v17H0z" fill="#29a8e8"/><path d="M3 10h24L15 19z" fill="#f2f2f2"/><path d="M15 19l15-8v17z" fill="#5cc8f8"/><path d="M15 19l15 9H0z" fill="#1f92dc"/></svg></b>
    <b class="app"><svg viewBox="0 0 30 30"><rect width="30" height="30" fill="url(#gm)"/><path d="M3 22L10 8h3L7 22zM9 22L16 8h3L13 22zM14 22l7-14h3v10h-3v-4l-4 8z" fill="#dfe4ff"/><circle cx="22.500" cy="21" r="1.500" fill="#dfe4ff"/></svg></b>
    <b class="app"><svg viewBox="0 0 30 30"><rect width="30" height="30" fill="#76b900"/><path d="M12 8h13v14H12z" fill="#fff"/><ellipse cx="12.500" cy="15" rx="7.500" ry="5.500" fill="#76b900" stroke="#fff" stroke-width="1.600"/><ellipse cx="13.500" cy="15" rx="4" ry="3" fill="none" stroke="#fff" stroke-width="1.600"/></svg></b>
    <b class="app"><svg viewBox="0 0 30 30"><path d="M15 1l13 7v14l-13 7-12-7V8z" fill="url(#g3)"/><path d="M3 9l11-8 3 3-6 7v11l4 3-2 3-10-6z" fill="#5478c8"/><path d="M15 9l6 3v7l-6 4-4-3v-8z" fill="#212121"/><path d="M13 23l15-9v8l-13 7z" fill="#b080e0"/></svg></b>
    <b class="app run"><svg viewBox="0 0 30 30"><circle cx="15" cy="15" r="15" fill="#fbc116"/><path d="M2 7.500A15 15 0 0014 30l7.500-11.500L9 13z" fill="#30a04c"/><path d="M2 7.500A15 15 0 0128 7.500H15l-6.500 10z" fill="#e33b2e"/><circle cx="15" cy="15" r="7" fill="#fff"/><circle cx="15" cy="15" r="5.500" fill="#3b7ded"/></svg></b>
    <b class="app run"><svg viewBox="0 0 30 30"><circle cx="15" cy="15" r="15" fill="#5865f2"/><path d="M7 21c-1-5 0-9 3-12l3-.5.800 1.500h2.400l.8-1.500 3 .5c3 3 4 7 3 12-1 1-3 1.500-4 1.500l-1.200-2h-5.600l-1.200 2c-1 0-3-.5-4-1.500z" fill="#fff"/><circle cx="12" cy="15.500" r="1.900" fill="#5865f2"/><circle cx="18" cy="15.500" r="1.900" fill="#5865f2"/><circle cx="26" cy="3.500" r="8.500" fill="#e04c4c"/><text x="19" y="8" font-family="Noto Sans" font-size="12" font-weight="600" fill="#fff">9+</text></svg></b>
    <b class="app"><svg viewBox="0 0 30 30"><circle cx="15" cy="15" r="15" fill="#1ed760"/><path d="M6 9.500c6-2 13-1.500 18.500 1.500M7 15c5-1.500 11-1 16 1.700M8 20c4-1 9-.8 13 1.500" fill="none" stroke="#111" stroke-width="2.800" stroke-linecap="round"/></svg></b>
    <b class="app"><svg viewBox="0 0 30 30"><circle cx="15" cy="15" r="14.500" fill="url(#gs)"/><path d="M0 14l10 5 7-10 6 5-9 7c0 5-7 6-8 1l-5-3z" fill="#fff"/><circle cx="20" cy="11" r="5" fill="#fff"/><circle cx="20" cy="11" r="3.200" fill="#2a4470" stroke="#fff"/><circle cx="10" cy="21" r="2.500" fill="none" stroke="#2a4470"/></svg></b>
    <b class="app"><svg viewBox="0 0 30 30"><path d="M2 1c0-1 1-1 2-1h22c1 0 2 0 2 1v24l-13 5-13-5z" fill="#050505"/><text x="5.500" y="15.500" font-family="Roboto" font-weight="700" font-size="14" textLength="19" lengthAdjust="spacingAndGlyphs" fill="#fff">EPIC</text><text x="6" y="22.500" font-family="Roboto" font-weight="700" font-size="5.500" textLength="18" fill="#fff">GAMES</text><path d="M10 25.500h10l-5 2z" fill="#fff"/></svg></b>
    <b class="app"><svg viewBox="0 0 30 30"><path d="M15 1l13 7v14l-13 7-13-7V8z" fill="#161616" stroke="#aaa" stroke-width="1.200"/><g fill="none" stroke-width="3"><path d="M8 8c3-3 6-4 9-3" stroke="#f4c020"/><path d="M18 5c4 1 6 4 6.500 8" stroke="#4bc040"/><path d="M25 14c0 4-2 8-6 10" stroke="#20b0e8"/><path d="M19 25c-4 1-7 0-10-3" stroke="#6040e0"/><path d="M8 22c-3-4-3-9-.5-13" stroke="#e83a78"/></g><circle cx="15" cy="15" r="7" fill="#222"/><circle cx="15" cy="15.500" r="5" fill="none" stroke="#fff" stroke-width="2.400"/><path d="M15 8v8" stroke="#222" stroke-width="5"/><path d="M15 9v7" stroke="#fff" stroke-width="2.400"/></svg></b>
    <b class="app sel"><svg viewBox="0 0 24 24"><circle cx="11.500" cy="11.500" r="9" fill="#262626" stroke="url(#gq)" stroke-width="4.800"/><path d="M13 14l4-1.500L24 20v4h-5L13 18z" fill="#79b04a"/><path d="M14 12.500l2.500 0 5 6-2 1.500-6-5z" fill="#e8e88a"/><path d="M10 9.500h4l2 2.500-2.500 3-2.500-2z" fill="#ee7913"/></svg></b>
  </div>
  <div class="tray">
    <svg width="14" height="60"><path d="M1.500 33l5.500-5.500 5.500 5.500" fill="none" stroke="#fff" stroke-width="1.800"/></svg>
    <svg class="mic" width="16" height="60"><rect x="5.500" y="21" width="5.500" height="11" rx="2.700" fill="none" stroke="#e09080" stroke-width="1.600"/><path d="M2.500 29c0 8 11.500 8 11.500 0M8.200 35v4" fill="none" stroke="#e09080" stroke-width="1.600"/></svg>
    <svg class="wifi" width="20" height="60"><path d="M1 27c5-5.500 13-5.500 18 0M4 30.300c3.500-3.500 8.500-3.500 12 0M7 33.300c2-1.800 4-1.800 6 0" fill="none" stroke="#fff" stroke-width="1.700"/><circle cx="10" cy="36" r="1.700" fill="#fff"/></svg>
    <svg class="vol" width="20" height="60"><path d="M1.500 27.500h3.500l5-4.500v14l-5-4.500H1.500z" fill="none" stroke="#fff" stroke-width="1.400"/><path d="M13 27c1.500 2 1.500 4 0 6M15.500 24.500c3.500 3.500 3.500 7.500 0 11" fill="none" stroke="#fff" stroke-width="1.400"/></svg>
    <svg class="bat" width="22" height="60"><rect x="3" y="25" width="15" height="11.500" rx="2.500" fill="#fff" stroke="#fff"/><path d="M19 28.500h2v4.500h-2z" fill="#fff"/><path d="M6 21l-5 8h4l-1 6 6-8.500H6.500l3-5.500z" fill="#fff" stroke="#202020"/></svg>
    <div class="time"><span>20:58</span><span>01.12.2024</span></div>
    <svg class="bell" width="18" height="60"><path d="M9 21c-5 0-6 4-6 7v4l-2 4h16l-2-4v-4c0-3-1-7-6-7zM6.500 37h5c0 3-5 3-5 0z" fill="#f29a8c"/></svg>
  </div>
</footer>

<div class="dialog">
  <div class="dt"><svg class="s20"><use href="#q"/></svg><span>Delete 1 feature(s) from layer "airports"</span><svg width="13" height="13"><path d="M.5.500l12 12M12.500.500l-12 12" stroke="#222" stroke-width="1.200"/></svg></div>
  <div class="db">
    <svg width="40" height="40"><circle cx="20" cy="20" r="20" fill="url(#gk)"/><path d="M14.500 16c0-7 11-7 11 0 0 4-5.500 4-5.500 8.500" fill="none" stroke="#fff" stroke-width="1.900"/><circle cx="20" cy="28.500" r="1.400" fill="#fff"/></svg>
    <div class="dc"><p class="l1"><b>1</b> selected feature(s) is/are about to be deleted. Would you</p><p class="l2">like to continue?</p><div class="dcb"><i class="cb"></i><span>Don't show this message again</span></div></div>
  </div>
  <div class="dbtn"><span class="btn pri">Delete 1 Feature(s)</span><span class="btn">Anuluj</span></div>
</div>
</body>
</html>
```
FILE: styles.css
```css
*{box-sizing:border-box}
body{margin:0;width:1920px;height:1080px;overflow:hidden;background:#efefef;position:relative;display:flex;flex-direction:column;font-family:"Open Sans","Noto Sans",sans-serif;font-size:14.5px;letter-spacing:-.2px;color:#000;white-space:nowrap}
svg{display:block;flex:none;overflow:visible}
.paints{position:absolute}
.sprite{display:none}
i{font-style:normal;display:block;flex:none}
u{text-underline-offset:2px;text-decoration-thickness:1px}
.s20{width:20px;height:20px}
.titlebar{height:29px;background:#f3f3f3;display:flex;align-items:center;padding-left:2px;color:#7d7d7d;font-size:14.500px;letter-spacing:-.05px}
.wintitle{margin-left:6px}
.winbtns{margin-left:auto;display:flex;gap:46px;padding-right:26px}
.menu{height:25px;border-bottom:1px solid #d5d5d5;padding-left:11px;display:grid;grid-template-columns:61px 58px 57px 72px 87px 66px 62px 56px 98px 98px 55px 40px 84px 60px;align-items:center;color:#9a9a9a;line-height:24px;padding-top:1px;letter-spacing:-.25px}
.toolbar{height:39px;display:flex;align-items:center;background:linear-gradient(#fafafa,#efefef);border-bottom:1px solid #b5b5b5}
.toolbar.scp{height:38px}
.hd{width:18px;height:26px;padding-left:9px;background-image:radial-gradient(circle,#a8a8a8 .8px,transparent 1px);background-size:4px 4px;background-clip:content-box;background-origin:content-box;padding-right:4px}
.hd.first{width:15px;padding-left:6px}
.tb{width:32px;height:31px;margin-right:1px;flex:none;display:flex;align-items:center;padding-left:4px;border-radius:3px;position:relative}
.tb svg{width:24px;height:24px}
.tb.on{background:#dcdcdc;border:1px solid #a5a5a5;padding-left:3px}
.tb.off svg{opacity:.28}
.tb.gray svg{filter:grayscale(1)}
.tb.dd{width:47px}
.tb.dd::after,.arr,.tri{content:"";width:0;border:4.500px solid transparent;border-top:5.500px solid #555;border-bottom:0}
.tb.dd::after{margin-left:7px}
.tb.off.dd::after{border-top-color:#aaa}
.sp{width:8px;height:28px;border-left:1px solid #d0d0d0;margin:0;transform:translateX(4px)}
.dark{height:22px;background:#5f5f5f;color:#fff;font-size:12px;letter-spacing:0;display:flex;align-items:center;margin-right:1px;flex:none}
.rad{width:16px;height:16px;border-radius:50%;background:radial-gradient(circle,#a8a8a8 3.500px,#6c6c6c 4.500px);border:1px solid #8a8a8a;margin:0 8px 0 1px}
.lab{height:20px;background:#555;color:#fff;font-weight:700;font-size:12px;letter-spacing:-.2px;line-height:19px;text-align:right;margin-right:1px;flex:none;overflow:hidden}
.spin{height:24px;background:linear-gradient(#fff,#f0f0f0);border:1px solid #aaa;border-radius:3px;margin-right:1px;flex:none;display:flex;position:relative;font-family:"DejaVu Sans Condensed","Noto Sans",sans-serif;font-size:12px;letter-spacing:0}
.spin>span{background:#fff;border-right:1px solid #aaa;flex:1;margin-right:16px;padding-left:4px;line-height:22px;border-radius:3px 0 0 3px}
.spin::before,.spin::after{content:"";position:absolute;right:4px;border:4.500px solid transparent}
.spin::before{top:4px;border-top:0;border-bottom:5.500px solid #555}
.spin::after{bottom:4px;border-bottom:0;border-top:5.500px solid #555}
.spin.low::after{border-top-color:#bbb}
.combo>span{border:0;margin-right:24px}
.combo::before{display:none}
.combo::after{bottom:8px;right:9px}
.w11{width:11px}.w12{width:12px}.w26{width:26px}.w28{width:28px}.w30{width:30px}.w50{width:50px}.w60{width:60px}.w69{width:69px}.w74{width:74px}.w80{width:80px}.w89{width:89px}.w93{width:93px}.w100{width:100px}
.work{height:818px;display:flex}
.left{width:410px;display:flex;flex-direction:column}
.vs{width:7px}
.map{width:1234px;background:#9fd622;border-left:1px solid #999;border-right:1px solid #999;height:816px;margin-top:1px}
.right{width:262px;display:flex;flex-direction:column}
.dock{height:23px;display:flex;align-items:center;gap:3px;padding:0 2px 0 4px}
.dock span{flex:1}
.dock svg{width:11px;height:11px;margin-bottom:2px}
.minibar{height:28px;display:flex;align-items:center;gap:9px;padding:0 0 3px 8px}
.minibar svg{width:16px;height:16px}
.arr{margin:0 0 0 -2px}
.tree{background:#fff;border:1px solid #b0b0b0;overflow:hidden}
.layers{height:468px}
.row{height:22px;display:flex;align-items:center}
.layers .row{padding-left:28px;position:relative}
.layers .row.cur{background:#efefef}
.layers .row.sub{padding-left:53px}
.layers .row.sub.last{height:21px}
.cb{width:17px;height:17px;background:#fff;border:1px solid #b5b5b5;flex:none}
.cb svg{width:15px;height:15px}
.layers .row .sym{width:18px;height:18px;margin:0 6px 0 5px}
.ln{width:19px;height:2px;margin:0 6px}
.pink{background:#f0708f}.tan{background:#b8ac8a}
.sw{width:19px;height:19px;margin:0 6px;border:1px solid rgba(0,0,0,.6)}
.green{background:#729b6f}.amber{background:#e5b636}.lime{background:#9fd622}.red{background:#e92b4f}.violet{background:#5a14ee}.teal{background:#38c8b0}
.poly{width:20px;height:16px;margin:0 6px 0 6px}
.bold,.ital{font-weight:700;font-size:14px;letter-spacing:-.3px}
.ital{font-style:italic;color:#808080;letter-spacing:-.1px}
.chip{width:19px;height:19px;margin-left:auto;margin-right:8px}
.tri{position:absolute;left:8px;top:8px}
.tabs{height:29px;margin-top:1px;border-top:1px solid #b0b0b0;display:flex;align-items:flex-start;font-size:12.500px;letter-spacing:-.1px}
.tab{width:85px;height:26px;background:#dcdcdc;border:1px solid #b0b0b0;border-top:0;border-radius:0 0 0 3px;text-align:center;line-height:27px}
.tab.act{width:79px;height:28px;background:#f8f8f8;border-left:0;border-radius:0 0 3px 3px;line-height:29px}
.dots{width:17px;height:2px;margin:3px auto 0 198px;background:repeating-linear-gradient(90deg,#bbb 0 1px,transparent 1px 3px)}
.dock.d2{margin-top:2px}
.minibar.m2{height:28px;padding-bottom:5px}
.browser{height:211px;display:flex}
.rows{flex:1;overflow:hidden;position:relative}
.browser .row{padding-left:20px;position:relative}
.browser .row svg{width:20px;height:20px}
.browser .row span{margin-left:6px}
.browser .row.in{padding-left:37px}
.browser .tri{left:4px}
.scroll{width:17px;border-left:1px solid #b0b0b0;display:flex;flex-direction:column;background:#e3e3e3}
.scroll .up,.scroll .down{height:17px;background:#f8f8f8;border-bottom:1px solid #b0b0b0;position:relative}
.scroll .down{border-bottom:0;border-top:1px solid #b0b0b0}
.scroll .up::after,.scroll .down::after{content:"";position:absolute;left:3px;top:5px;border:5px solid transparent;border-top:0;border-bottom:5px solid #555}
.scroll .down::after{border-bottom:0;border-top:5px solid #555}
.scroll .track{height:36px}
.scroll .thumb{height:84px;background:#f8f8f8;border:1px solid #b0b0b0;border-width:1px 0}
.scroll .track2{flex:1}
.msg{height:36px;background:#dff0d8;border-bottom:1px solid #9ac489;border-top:1px solid #9aa892;display:flex;align-items:center;font-size:12px;letter-spacing:.12px;padding:0 23px 0 9px}
.ok{margin-right:11px}
.msg b{margin-right:5px;font-size:12.500px;letter-spacing:.37px}
.msg a{color:#1b9a1b;text-decoration:underline;margin-left:4px}
.cl{margin-left:auto}
.m3{gap:0}
.m3>svg{margin-right:9px}
.m3>svg:nth-child(3){margin-right:5px}
.m3 .on{width:24px;height:23px;border:1px solid #aaa;background:#dcdcdc;border-radius:3px;display:flex;align-items:center;justify-content:center}
.m3 .sp{height:12px;width:9px;transform:translateX(5px)}
.m3 .on+.sp{width:13px}
.m3 .sp+svg{margin-right:8px}
.find{height:25px;border:1px solid #a5a5a5;border-radius:3px;background:#fff;display:flex;align-items:center;color:#777;font-size:12.500px;letter-spacing:-.05px}
.right .find{margin-top:1px}
.find svg{width:15px;height:15px;margin:0 8px 0 10px}
.algs{height:194px;display:flex}
.algs .rows{padding-top:1px}
.algs .row{padding-left:10px}
.algs .row svg{width:18px;height:18px;margin:0 7px 0 14px}
.rt{width:0;border:5px solid transparent;border-left:5px solid #555;border-right:0}
.algs .thumb{height:52px;border-top:0}
.d3{margin:3px auto 0 124px}
.dock.d4{height:21px;padding-top:4px}
.res{height:258px}
.d5{margin:2px auto 2px 124px}
.res2{height:258px}
.status{height:32px;display:flex;align-items:center;font-size:12px;letter-spacing:.03px;padding:1px 7px 0 4px;white-space:nowrap}
.loc{width:232px;height:26px;margin-right:719px}
.t1{width:78px}
.box{width:115px;height:26px;background:#fff;border:1px solid #aaa;border-radius:3px;text-align:center;line-height:24px;margin-right:3px;letter-spacing:.2px}
.mouse{margin-right:14px}
.t2{width:34px}
.status .spin{height:24px;margin-right:0}
.lock{margin:0 9px 0 12px}
.t3{width:79px}
.t4{width:77px;padding-left:9px}
.status .spin+.cb{margin-left:6px}
.t5{width:67px;margin-left:6px}
.crs{margin-right:1px}
.t6{flex:1}
.task{height:60px;background:#212121;border-top:1px solid #3a3f3a;display:flex;color:#fff;position:relative}
.wx{margin:13px 0 0 24px}
.wt{margin:9px 0 0 6px;display:flex;flex-direction:column;line-height:20px;width:309px}
.wt span+span{color:#c8c8c8}
.apps{display:flex;align-items:center}
.app{width:48px;height:51px;margin-right:7px;display:flex;align-items:center;justify-content:center;position:relative;border-radius:4px}
.app svg{width:29px;height:29px}
.app.run::after,.app.sel::after{content:"";position:absolute;bottom:0;left:20px;width:8px;height:4px;border-radius:2px;background:#9a9a9a}
.app.sel{background:#2d2d2d;border:1px solid #3a3a3a}
.app.sel::after{left:13px;width:20px;background:#f36a66}
.wsearch{width:273px;height:38px;border-radius:19px;background:#f3f3f3;margin:0 7px 0 2px;display:flex;align-items:center;color:#555;font-size:17px;letter-spacing:-.4px}
.wsearch svg{margin:0 11px 0 14px}
.tray{display:flex;margin-left:auto;padding-right:26px}
.mic{margin-left:26px}.wifi{margin-left:22px}.vol{margin-left:9px}.bat{margin-left:10px}
.time{width:91px;display:flex;flex-direction:column;text-align:right;line-height:20px;padding-top:9px;font-size:14.500px;letter-spacing:-.1px}
.bell{margin-left:11px}
.dialog{position:absolute;left:710px;top:420px;width:500px;height:171px;border-radius:9px;background:#efefef;box-shadow:0 0 0 1px rgba(90,100,60,.5),0 32px 50px rgba(0,0,0,.28),0 4px 30px rgba(0,0,0,.1);overflow:hidden}
.dt{height:37px;background:linear-gradient(100deg,#f3f3f3 40%,#fbf0ee 60%);display:flex;align-items:center;padding:0 14px 0 9px}
.dt span{flex:1;margin-left:5px}
.db{display:flex;padding:13px 0 0 13px;height:96px}
.dc{margin-left:21px}
.dc p{margin:0;height:20px;line-height:22px;letter-spacing:-.05px}
.dc .l2{margin-bottom:9px}
.dcb{display:flex;align-items:center;gap:6px;font-size:12px;letter-spacing:.18px;padding-top:1px}
.dbtn{display:flex;justify-content:flex-end;gap:7px;padding-right:13px;font-size:12px;letter-spacing:.25px}
.btn{width:80px;height:25px;border:1px solid #aaa;border-radius:3px;background:linear-gradient(#fff,#f0f0f0);text-align:center;line-height:25px}
.btn.pri{width:120px;border-color:#3f9fee}
```
